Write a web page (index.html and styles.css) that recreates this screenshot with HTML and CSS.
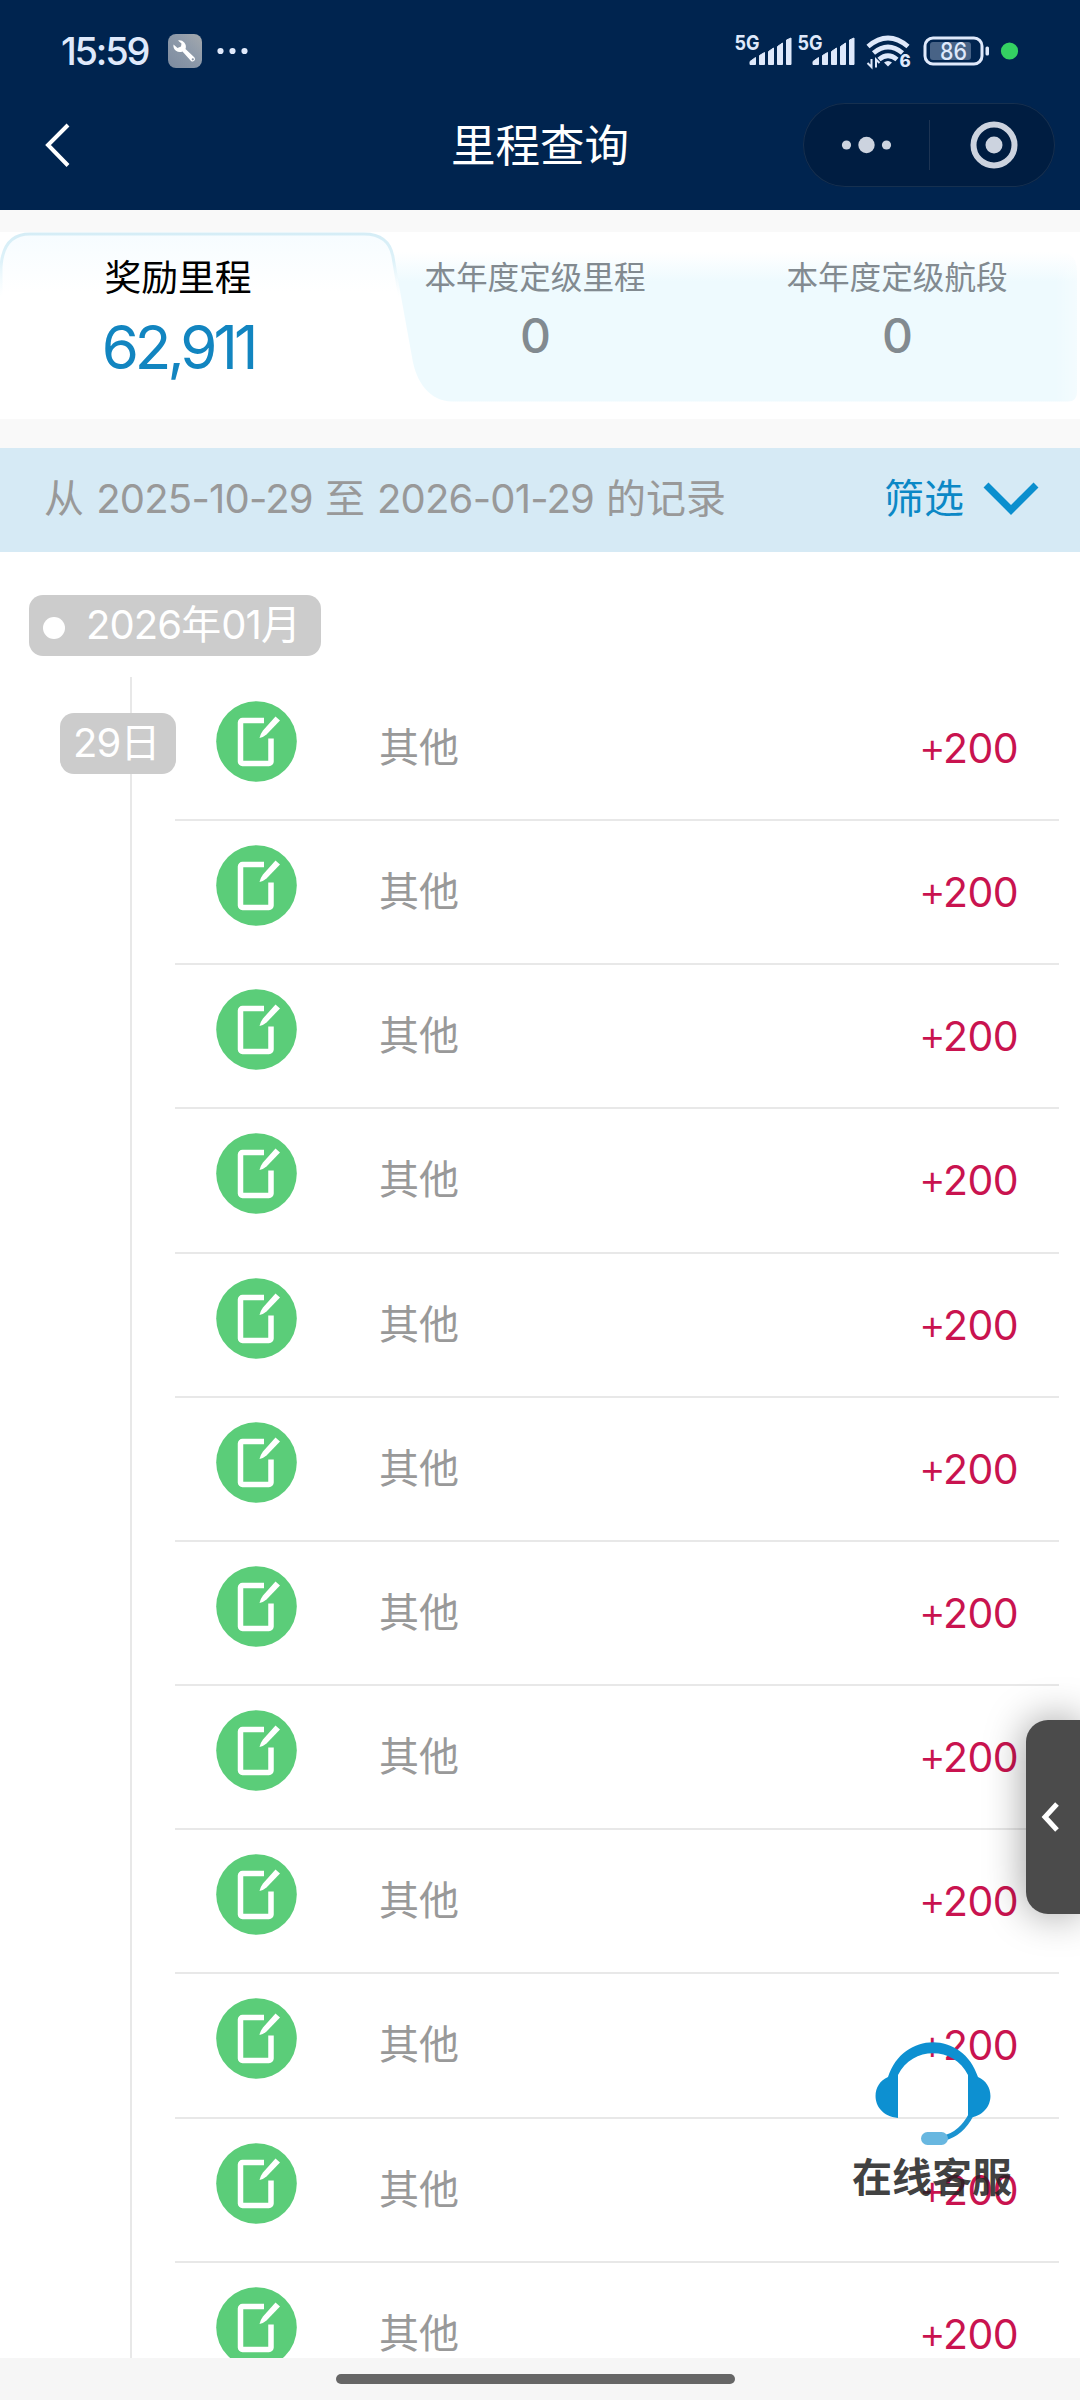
FILE: index.html
```html
<!DOCTYPE html>
<html lang="zh-CN">
<head>
<meta charset="utf-8">
<title>里程查询</title>
<link rel="stylesheet" href="styles.css">
</head>
<body>
<svg width="0" height="0" class="defs">
  <symbol id="note" viewBox="0 0 81 81">
    <circle cx="40.5" cy="40.5" r="40.3" fill="#5bcd79"/>
    <path d="M48 19.5H26.500a2 2 0 0 0-2 2V60.500a2 2 0 0 0 2 2H53a2 2 0 0 0 2-2V37.500" fill="none" stroke="#fff" stroke-width="5.500"/>
    <path d="M59.500 15.500L64 19.500L50.500 33.500Q47 36.500 43.500 37Q44 33.500 47 29.500Z" fill="#fff"/>
  </symbol>
</svg>
<div class="screen">
  <header class="top">
    <div class="status">
      <span class="clock">15:59</span>
      <svg class="tool" width="34" height="34" viewBox="0 0 34 34">
        <defs><linearGradient id="tg" x1="0" y1="1" x2="1" y2="0"><stop offset="0" stop-color="#7d8b9f"/><stop offset=".6" stop-color="#8f9baa"/><stop offset="1" stop-color="#a5a9ad"/></linearGradient></defs>
        <rect width="34" height="34" rx="8" fill="url(#tg)"/>
        <path d="M10 6.500a6.500 6.500 0 0 1 7.500 8.500L26.500 23.500a2.500 2.500 0 0 1-3.500 3.500L14.500 17.500a6.500 6.500 0 0 1-9-7L9.500 14L13 12.500L13.500 9.500Z" fill="#fff"/>
        <circle cx="24.800" cy="25.300" r="1.100" fill="#8995a6"/>
      </svg>
      <svg class="more" width="31" height="8" viewBox="0 0 31 8" fill="#dfe9fb"><circle cx="3.500" cy="4" r="3.100"/><circle cx="15.500" cy="4" r="3.100"/><circle cx="27.500" cy="4" r="3.100"/></svg>
      <svg class="signals" width="290" height="54" viewBox="732 24 290 54" fill="#dfe9fb">
        <g>
          <text class="net" x="734.500" y="49.500" textLength="25" lengthAdjust="spacingAndGlyphs">5G</text>
          <path d="M750 64.500v-3l5.500-4v7zM759.500 64.500v-9l5-3v12zM768.500 64.500v-13l5-3.500v16.500zM777.500 64.500v-18l5-3.500v21.500zM786.500 64.500V40l4.500-2v26.500z" stroke="#dfe9fb" stroke-linejoin="round"/>
        </g>
        <g transform="translate(63 0)">
          <text class="net" x="734.500" y="49.500" textLength="25" lengthAdjust="spacingAndGlyphs">5G</text>
          <path d="M750 64.500v-3l5.500-4v7zM759.500 64.500v-9l5-3v12zM768.500 64.500v-13l5-3.500v16.500zM777.500 64.500v-18l5-3.500v21.500zM786.500 64.500V40l4.500-2v26.500z" stroke="#dfe9fb" stroke-linejoin="round"/>
        </g>
        <g fill="none" stroke="#dfe9fb" stroke-width="4.800">
          <path d="M868 46.500Q888 29.500 908 46.500"/><path d="M873.500 53Q888 41 902.500 53"/><path d="M879 59.500Q888 52 897 59.500"/>
        </g>
        <path d="M884 62.500q4-3 8 0l-4 4z"/>
        <path d="M871.500 59v8l-4-4M876 67.500v-8l3.500 3.500" fill="none" stroke="#dfe9fb" stroke-width="2"/>
        <text class="six" x="899.500" y="67">6</text>
        <rect x="925" y="38" width="57" height="26" rx="8" fill="none" stroke="#dfe9fb" stroke-width="3"/>
        <rect x="930" y="42" width="41" height="18" rx="3" fill="#dfe9fb" opacity=".32"/>
        <rect x="985.500" y="46.500" width="3.500" height="9" rx="1.500"/>
        <text class="batt" x="940" y="60" textLength="27" lengthAdjust="spacingAndGlyphs">86</text>
        <circle cx="1009.500" cy="51" r="8.600" fill="#34d162"/>
      </svg>
    </div>
    <div class="nav">
      <svg class="back" width="28" height="46" viewBox="0 0 28 46"><path d="M25 3L5 23L25 43.500" fill="none" stroke="#fff" stroke-width="4"/></svg>
      <h1 class="title">里程查询</h1>
      <div class="capsule">
        <svg width="252" height="84" viewBox="0 0 252 84" fill="#ccd3df">
          <circle cx="43.500" cy="42" r="4.600"/><circle cx="63.500" cy="42" r="8.200"/><circle cx="83.500" cy="42" r="4.600"/>
          <rect x="126" y="17" width="1" height="50" fill="#1d3453"/>
          <circle cx="191" cy="42" r="20.500" fill="none" stroke="#ccd3df" stroke-width="6"/><circle cx="191" cy="42" r="8.500"/>
        </svg>
      </div>
    </div>
  </header>

  <section class="tabs">
    <svg class="tabs-bg" width="1080" height="187" viewBox="0 0 1080 187">
      <defs>
        <linearGradient id="panel" x1="0" y1="20" x2="0" y2="50" gradientUnits="userSpaceOnUse"><stop offset="0" stop-color="#fff"/><stop offset="1" stop-color="#eefafe"/></linearGradient>
        <linearGradient id="fill" x1="0" y1="0" x2="0" y2="60" gradientUnits="userSpaceOnUse"><stop offset="0" stop-color="#f6fcff"/><stop offset="1" stop-color="#fff"/></linearGradient>
        <linearGradient id="edge" x1="0" y1="0" x2="0" y2="65" gradientUnits="userSpaceOnUse"><stop offset="0" stop-color="#d5edf6"/><stop offset=".45" stop-color="#def2f9"/><stop offset="1" stop-color="#eefafe" stop-opacity="0"/></linearGradient>
        <linearGradient id="fade" x1="1055" y1="0" x2="1078" y2="0" gradientUnits="userSpaceOnUse"><stop offset="0" stop-color="#fff" stop-opacity="0"/><stop offset="1" stop-color="#fff" stop-opacity=".35"/></linearGradient>
      </defs>
      <path d="M393 20H1060Q1077 20 1077 40V160Q1077 169.500 1068 169.500H452C430 169 416 151 412 125Z" fill="url(#panel)"/>
      <rect x="1050" y="18" width="30" height="153" fill="url(#fade)"/>
      <path d="M1 66V35Q3 2 30 2H364Q389 2 393 25L403 85" fill="url(#fill)" stroke="url(#edge)" stroke-width="3"/>
    </svg>
    <div class="tab active"><span class="label">奖励里程</span><span class="value">62,911</span></div>
    <div class="tab"><span class="label">本年度定级里程</span><span class="value">0</span></div>
    <div class="tab"><span class="label">本年度定级航段</span><span class="value">0</span></div>
  </section>

  <section class="filter">
    <span class="range">从<span class="date">2025-10-29</span>至<span class="date">2026-01-29</span>的记录</span>
    <span class="choose">筛选<svg width="56" height="34" viewBox="0 0 56 34"><path d="M3 3L28 28L53 3" fill="none" stroke="#0b8fce" stroke-width="7"/></svg></span>
  </section>

  <main class="records">
    <div class="month"><span class="dot"></span><span class="month-text"><span class="num">2026</span>年<span class="num">01</span>月</span></div>
    <div class="day-group">
      <div class="rail"><span class="day"><span class="num">29</span>日</span></div>
      <ul class="rows">
        <li class="row"><svg class="icon"><use href="#note"/></svg><span class="name">其他</span><span class="amount"><span class="sign">+</span>200</span></li>
        <li class="row"><svg class="icon"><use href="#note"/></svg><span class="name">其他</span><span class="amount"><span class="sign">+</span>200</span></li>
        <li class="row"><svg class="icon"><use href="#note"/></svg><span class="name">其他</span><span class="amount"><span class="sign">+</span>200</span></li>
        <li class="row"><svg class="icon"><use href="#note"/></svg><span class="name">其他</span><span class="amount"><span class="sign">+</span>200</span></li>
        <li class="row"><svg class="icon"><use href="#note"/></svg><span class="name">其他</span><span class="amount"><span class="sign">+</span>200</span></li>
        <li class="row"><svg class="icon"><use href="#note"/></svg><span class="name">其他</span><span class="amount"><span class="sign">+</span>200</span></li>
        <li class="row"><svg class="icon"><use href="#note"/></svg><span class="name">其他</span><span class="amount"><span class="sign">+</span>200</span></li>
        <li class="row"><svg class="icon"><use href="#note"/></svg><span class="name">其他</span><span class="amount"><span class="sign">+</span>200</span></li>
        <li class="row"><svg class="icon"><use href="#note"/></svg><span class="name">其他</span><span class="amount"><span class="sign">+</span>200</span></li>
        <li class="row"><svg class="icon"><use href="#note"/></svg><span class="name">其他</span><span class="amount"><span class="sign">+</span>200</span></li>
        <li class="row"><svg class="icon"><use href="#note"/></svg><span class="name">其他</span><span class="amount"><span class="sign">+</span>200</span></li>
        <li class="row"><svg class="icon"><use href="#note"/></svg><span class="name">其他</span><span class="amount"><span class="sign">+</span>200</span></li>
      </ul>
    </div>
  </main>

  <footer class="home"><span class="pill"></span></footer>

  <div class="drawer"><svg width="20" height="32" viewBox="0 0 20 32"><path d="M16 3L4 16L16 29" fill="none" stroke="#fff" stroke-width="5"/></svg></div>
  <div class="service">
    <svg width="118" height="106" viewBox="0 0 118 106">
      <path d="M98 74Q88 93 71 97" fill="none" stroke="#1b93d0" stroke-width="5"/>
      <path d="M25 77C-3 74 -3 43 15 36C30 -10.500 90 -10.500 105 36C123 43 123 74 95 77V34C81 5 39 5 25 34Z" fill="#0d90d1"/>
      <rect x="48" y="91" width="27" height="13" rx="6.500" fill="#68b7e0"/>
    </svg>
    <span class="service-label">在线客服</span>
  </div>
</div>
</body>
</html>
```
FILE: styles.css
```css
* { box-sizing: border-box; }
body { margin: 0; background: #fff; font-family: Inter, "Noto Sans CJK SC", sans-serif; }
.defs { position: absolute; }
.screen { position: relative; display: flex; flex-direction: column; width: 1080px; height: 2400px; overflow: hidden; background: #f9f9f9; }

.top { height: 210px; flex: none; background: #00244f; }
.status { display: flex; align-items: center; height: 102px; padding: 0 58px 0 61px; color: #dfe9fb; }
.clock { width: 107px; font-size: 38px; font-weight: 500; line-height: 40px; letter-spacing: -2.200px; }
.more { margin-left: 15px; }
.signals { margin-left: auto; }
.net { font: 700 20px Inter, sans-serif; }
.six { font: 800 17px Inter, sans-serif; }
.batt { font: 500 24px Inter, sans-serif; }
.nav { display: grid; grid-template-columns: 1fr auto 1fr; align-items: center; height: 86px; padding: 0 25px 0 43px; }
.title { margin: 2px 0 0; padding-right: 18px; font-size: 44.500px; font-weight: 400; line-height: 60px; color: #fff; }
.capsule { justify-self: end; width: 252px; height: 84px; border-radius: 42px; background: #001d41; box-shadow: inset 0 0 0 1px #16304f; }
.capsule svg { display: block; }

.tabs { position: relative; flex: none; display: grid; grid-template-columns: 356px 358px 366px; height: 187px; margin-top: 22px; background: #fff; }
.tabs-bg { position: absolute; inset: 0; }
.tab { position: relative; display: flex; flex-direction: column; align-items: center; padding-top: 24px; color: #828a90; }
.label { font-size: 31.600px; line-height: 44px; }
.value { margin-top: 9px; font-size: 48px; line-height: 54px; font-weight: 500; letter-spacing: -1px; }
.active { padding-top: 23px; color: #000; }
.active .label { font-size: 36.800px; line-height: 46px; }
.active .value { margin-top: 9px; font-size: 60px; line-height: 74px; font-weight: 400; letter-spacing: -4px; color: #1285c0; }

.filter { flex: none; display: flex; justify-content: space-between; height: 104px; margin-top: 29px; padding: 0 41px 0 44px; background: #d6eaf5; font-size: 40px; line-height: 102px; }
.range { display: flex; color: #999; }
.date { width: 241px; text-align: center; letter-spacing: -.8px; }
.choose { display: flex; align-items: center; gap: 19px; height: 102px; color: #0b88c6; }

.records { flex: 1; min-height: 0; overflow: hidden; background: #fff; padding-top: 43px; }
.month { display: flex; align-items: center; gap: 21px; width: 292px; height: 61px; padding-left: 14px; margin-left: 29px; border-radius: 14px; background: #ccc; color: #fff; font-size: 40px; line-height: 59px; }
.month-text { height: 61px; white-space: nowrap; }
.num { letter-spacing: -.9px; }
.dot { width: 22px; height: 22px; margin-top: 5px; border-radius: 50%; background: #fff; }
.day-group { display: flex; margin-top: 21px; }
.rail { width: 175px; padding: 36px 0 0 60px; background: linear-gradient(#e8e8e8, #e8e8e8) 130px 0 / 2px 100% no-repeat; }
.day { display: block; width: 116px; height: 61px; border-radius: 14px; background: #ccc; color: #fff; font-size: 40px; line-height: 59px; padding-left: 13px; }
.rows { width: 884px; margin: 0; padding: 0; list-style: none; }
.row { display: flex; height: 144.170px; padding: 24px 41px 0; border-bottom: 2px solid #e8e8e8; font-size: 40px; line-height: 94px; }
.icon { width: 81px; height: 81px; }
.name { margin-left: 82px; color: #999; }
.amount { margin-left: auto; font-size: 41px; letter-spacing: -.6px; color: #c9134f; }
.sign { font-family: Lato, sans-serif; font-size: 39px; }

.home { flex: none; display: flex; justify-content: center; height: 42px; padding: 16px 9px 0 0; background: #f6f6f6; }
.pill { width: 399px; height: 10px; border-radius: 5px; background: #666; }

.drawer { position: absolute; top: 1720px; right: 0; width: 54px; height: 194px; padding: 81px 0 0 15px; border-radius: 22px 0 0 22px; background: #4b4b4b; box-shadow: 0 0 40px rgba(0, 0, 0, .4); }
.service { position: absolute; left: 851px; top: 2041px; width: 162px; display: flex; flex-direction: column; align-items: center; }
.service-label { margin-top: 3px; font-size: 40px; font-weight: 700; line-height: 56px; color: #222; opacity: .85; white-space: nowrap; }
```
